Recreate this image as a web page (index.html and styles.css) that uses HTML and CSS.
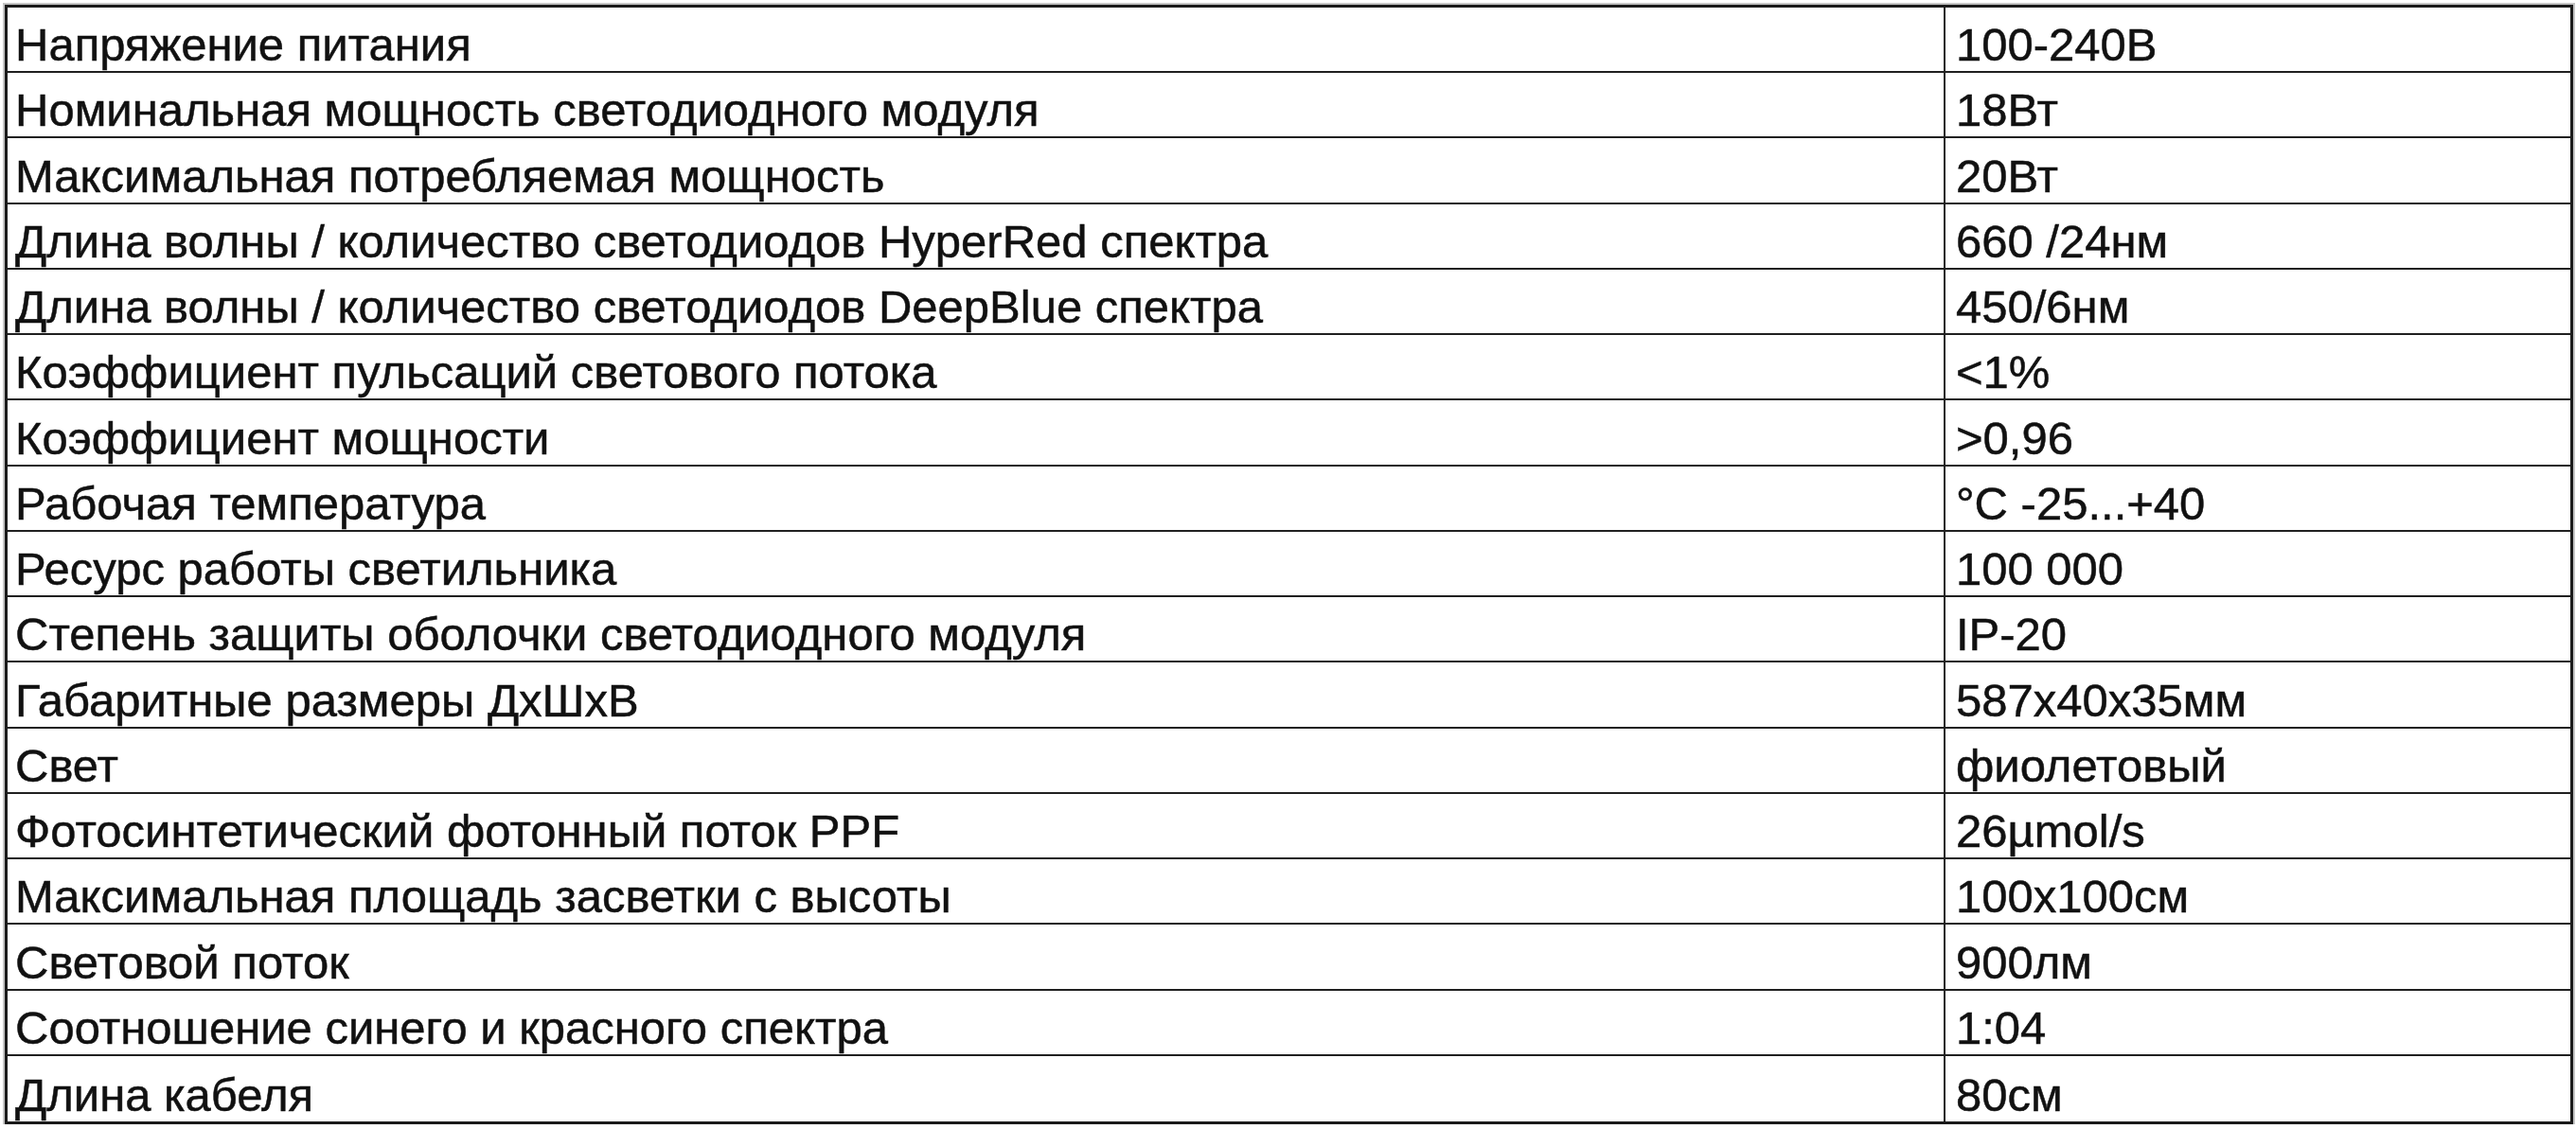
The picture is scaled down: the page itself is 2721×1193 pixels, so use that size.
FILE: index.html
```html
<!DOCTYPE html>
<html lang="ru">
<head>
<meta charset="utf-8">
<title>Характеристики</title>
<link rel="stylesheet" href="styles.css">
</head>
<body>
<div class="sheet">
  <div class="cell name">Напряжение питания</div><div class="cell val">100-240В</div>
  <div class="cell name">Номинальная мощность светодиодного модуля</div><div class="cell val">18Вт</div>
  <div class="cell name">Максимальная потребляемая мощность</div><div class="cell val">20Вт</div>
  <div class="cell name">Длина волны / количество светодиодов HyperRed спектра</div><div class="cell val">660 /24нм</div>
  <div class="cell name">Длина волны / количество светодиодов DeepBlue спектра</div><div class="cell val">450/6нм</div>
  <div class="cell name">Коэффициент пульсаций светового потока</div><div class="cell val">&lt;1%</div>
  <div class="cell name">Коэффициент мощности</div><div class="cell val">&gt;0,96</div>
  <div class="cell name">Рабочая температура</div><div class="cell val">°С -25...+40</div>
  <div class="cell name">Ресурс работы светильника</div><div class="cell val">100 000</div>
  <div class="cell name">Степень защиты оболочки светодиодного модуля</div><div class="cell val">IP-20</div>
  <div class="cell name">Габаритные размеры ДхШхВ</div><div class="cell val">587х40х35мм</div>
  <div class="cell name">Свет</div><div class="cell val">фиолетовый</div>
  <div class="cell name">Фотосинтетический фотонный поток PPF</div><div class="cell val">26µmol/s</div>
  <div class="cell name">Максимальная площадь засветки с высоты</div><div class="cell val">100х100см</div>
  <div class="cell name">Световой поток</div><div class="cell val">900лм</div>
  <div class="cell name">Соотношение синего и красного спектра</div><div class="cell val">1:04</div>
  <div class="cell name last">Длина кабеля</div><div class="cell val last">80см</div>
</div>
</body>
</html>
```
FILE: styles.css
```css
html, body {
  margin: 0;
  padding: 0;
  background: #ffffff;
}
body {
  padding: 5px 0 0 5px;
}
.sheet {
  width: 2713px;
  height: 1183px;
  box-sizing: border-box;
  border: 3px solid #1a1a1a;
  box-shadow: 0 0 0 2px #c4c4c4;
  display: grid;
  grid-template-columns: 2047px 1fr;
  grid-template-rows: repeat(17, 1fr);
  font-family: "Liberation Sans Narrow", "Liberation Sans", Arial, sans-serif;
  font-size: 49px;
  line-height: 1;
  color: #111111;
  -webkit-text-stroke: 0.5px #111111;
}
.cell {
  display: flex;
  align-items: flex-end;
  border-bottom: 2px solid #202020;
  padding-bottom: 3px;
  white-space: nowrap;
  overflow: hidden;
}
.cell.last {
  border-bottom: none;
}
.name {
  padding-left: 8px;
  border-right: 2px solid #202020;
}
.val {
  padding-left: 11px;
}
```
